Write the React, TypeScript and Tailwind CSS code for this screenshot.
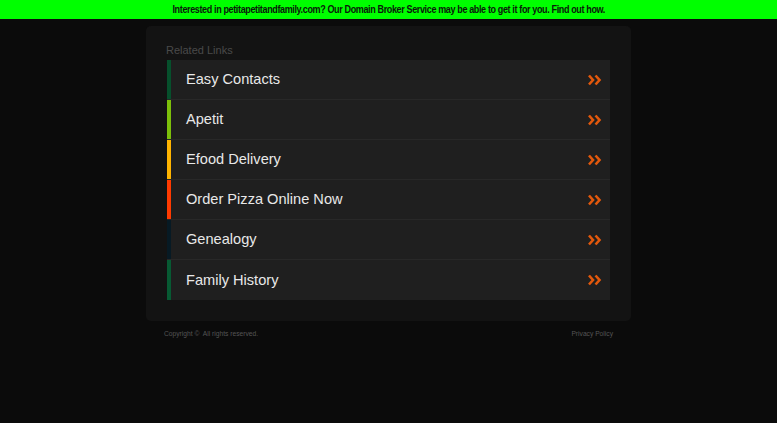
import React from "react";

const rows = [
  { label: "Easy Contacts", color: "bg-[#06502c]" },
  { label: "Apetit", color: "bg-[#7cbf0a]" },
  { label: "Efood Delivery", color: "bg-[#ffb400]" },
  { label: "Order Pizza Online Now", color: "bg-[#ff3a00]" },
  { label: "Genealogy", color: "bg-[#071a24]" },
  { label: "Family History", color: "bg-[#075a33]" },
];

function Chevrons() {
  return (
    <svg width="14" height="12" viewBox="0 0 14 12" className="block">
      <path d="M1 1.5 L5 6 L1 10.5" fill="none" stroke="#e2580c" strokeWidth="2.6" strokeLinejoin="miter" />
      <path d="M7.5 1.5 L11.5 6 L7.5 10.5" fill="none" stroke="#e2580c" strokeWidth="2.6" strokeLinejoin="miter" />
    </svg>
  );
}

export default function App() {
  return (
    <div className="w-[777px] h-[423px] bg-[#0b0b0b] overflow-hidden" style={{ fontFamily: '"Liberation Sans", Arial, sans-serif' }}>
      <div className="h-[19px] bg-[#00ff00] flex items-center justify-center">
        <span className="inline-block text-[11px] font-bold text-[#0a1a0a] whitespace-nowrap tracking-[-0.45px] origin-center scale-x-[0.82]">
          Interested in petitapetitandfamily.com? Our Domain Broker Service may be able to get it for you. Find out how.
        </span>
      </div>
      <div className="pt-[7px] flex justify-center">
        <div className="w-[485px] flex flex-col">
          <div className="bg-[#131313] rounded-[5px] px-[21px] pb-[21px] pt-[17px]">
            <div className="text-[11px] leading-[14px] text-[#4a4a4a] mb-[3px] -ml-[1px]">Related Links</div>
            <div className="flex flex-col">
              {rows.map((r, i) => (
                <div key={i} className={`h-[40px] flex items-center bg-[#1f1f1f] ${i < rows.length - 1 ? "border-b border-[#282828]" : ""}`}>
                  <div className={`w-[4px] self-stretch ${r.color}`} />
                  <div className="flex-1 pl-[15px] pt-[1px] text-[14.6px] text-[#e8e8e8]">{r.label}</div>
                  <div className="pr-[8px]">
                    <Chevrons />
                  </div>
                </div>
              ))}
            </div>
          </div>
          <div className="flex justify-between pl-[18px] pr-[18px] pt-[8px] text-[6.7px] text-[#555555]">
            <span>Copyright ©&nbsp; All rights reserved.</span>
            <span>Privacy Policy</span>
          </div>
        </div>
      </div>
    </div>
  );
}
